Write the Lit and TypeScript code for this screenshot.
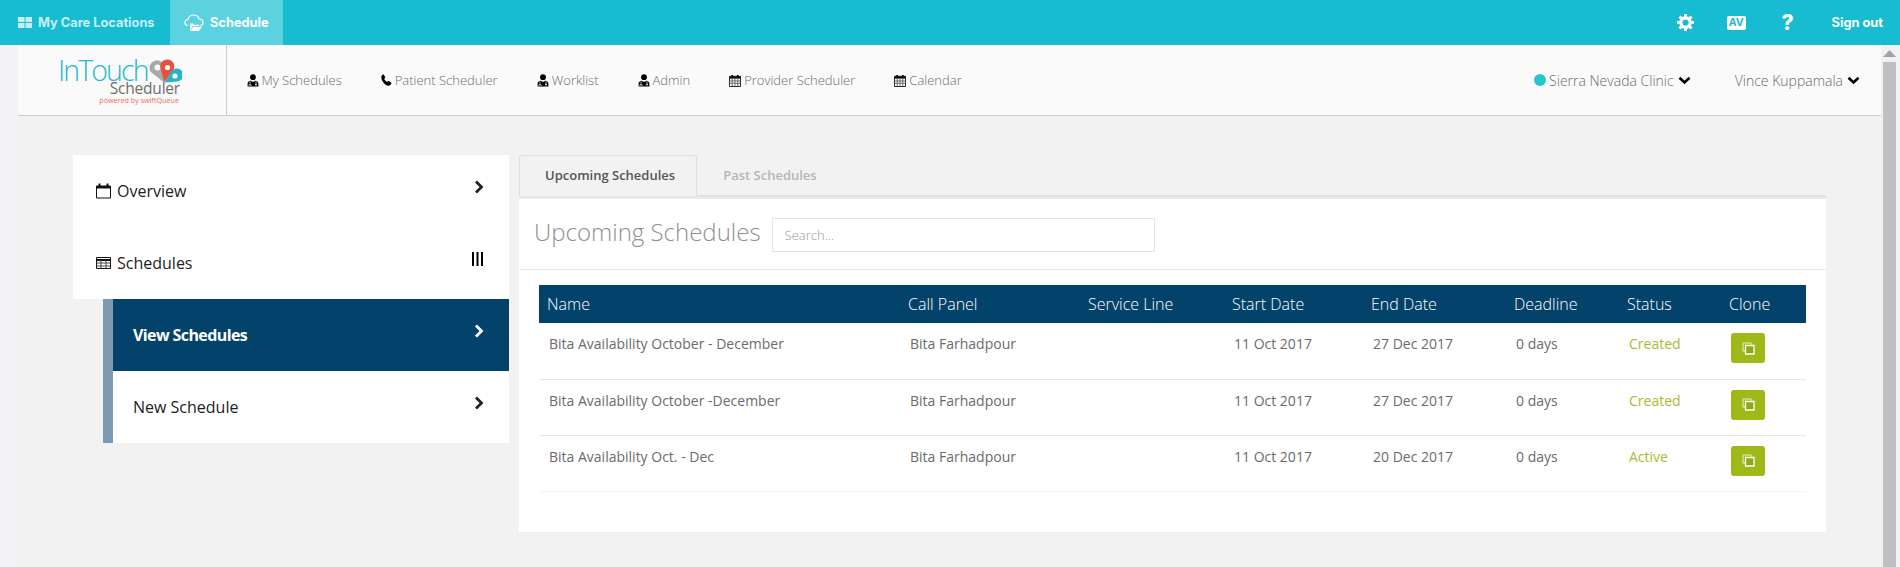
import { LitElement, html, css, svg } from 'lit';
import { customElement } from 'lit/decorators.js';

const doctor = html`<svg class="ico" width="12" height="13" viewBox="0 0 12 13"><circle cx="6" cy="3.2" r="2.9" fill="#000"/><path d="M.6 12.6V9.6C.6 7.9 2 7 3.6 6.7L6 8l2.4-1.3c1.6.3 3 1.2 3 2.9v3z" fill="#000"/><path d="M3 7.5v2M2 12v-1.2c0-.7 2-.7 2 0V12M9 7.5v2.2" stroke="#fff" stroke-width=".8" fill="none"/><circle cx="9" cy="10.6" r=".9" fill="#fff"/></svg>`;
const phone = html`<svg class="ico" width="11" height="12" viewBox="0 0 11 12"><path d="M2.6.4 4.2 3c.2.4.1.7-.2 1l-.8.8c.5 1.300 1.500 2.500 2.900 3.200l.8-.8c.3-.3.6-.3 1-.1l2.300 1.600c.3.200.4.600.2.900-.6 1.200-1.600 2.200-2.700 2.200C4 11.800.3 6.700.3 3 .3 2 1 1 2 .4c.2-.1.500-.1.600 0z" fill="#000"/></svg>`;
const gridCal = html`<svg class="ico" width="12" height="13" viewBox="0 0 13 14" fill="none"><path d="M.5 2.500h12v11H.5z" fill="#fff" stroke="#111"/><path d="M.5 2.500h12v2.500H.5z" fill="#111"/><path d="M3.500 1v2.500M9.500 1v2.500" stroke="#111" stroke-width="2"/><path d="M.5 7.500h12M.5 10h12M3.500 5v8.500M6.500 5v8.500M9.500 5v8.500" stroke="#555" stroke-width=".9"/></svg>`;
const chevDown = html`<svg class="chev-d" width="13" height="9" viewBox="0 0 13 9"><path d="M1.500 1.700 6.500 6.500l5-4.800" fill="none" stroke="#000" stroke-width="2.600"/></svg>`;
const chevRight = html`<svg class="chev-r" width="10" height="14" viewBox="0 0 10 14"><path d="M2 1.500 7.500 7 2 12.500" fill="none" stroke="currentColor" stroke-width="2.800"/></svg>`;
const copy = html`<svg width="13" height="13" viewBox="0 0 13 13" fill="none"><path d="M9 2.500V1H1v8h2" stroke="#e9f1c9" stroke-width="1"/><path d="M3.500 3.500h8.500V12H3.500z" stroke="#fff" stroke-width="1.300" fill="#8ea814"/></svg>`;

const navLinks = [
  { icon: doctor, label: 'My Schedules' },
  { icon: phone, label: 'Patient Scheduler' },
  { icon: doctor, label: 'Worklist' },
  { icon: doctor, label: 'Admin' },
  { icon: gridCal, label: 'Provider Scheduler' },
  { icon: gridCal, label: 'Calendar' },
];

const rows = [
  { name: 'Bita Availability October - December', panel: 'Bita Farhadpour', start: '11 Oct 2017', end: '27 Dec 2017', status: 'Created' },
  { name: 'Bita Availability October -December', panel: 'Bita Farhadpour', start: '11 Oct 2017', end: '27 Dec 2017', status: 'Created' },
  { name: 'Bita Availability Oct. - Dec', panel: 'Bita Farhadpour', start: '11 Oct 2017', end: '20 Dec 2017', status: 'Active' },
];

const columns = ['Name', 'Call Panel', 'Service Line', 'Start Date', 'End Date', 'Deadline', 'Status', 'Clone'];
const colWidths = [361, 180, 144, 139, 143, 113, 102, 85];

const logoMark = svg`<svg class="mark" width="34" height="24" viewBox="0 0 34 24">
  <path d="M16 23.500 2.600 12.800A7.600 7.600 0 1 1 16.500 7z" fill="#a9aaa8"/>
  <circle cx="9.500" cy="8.500" r="3" fill="#fafafa"/>
  <path d="M16.500 23.500 12.800 10A7 7 0 1 1 25.800 10z" fill="#e8503f"/>
  <circle cx="19.500" cy="8.500" r="2.600" fill="#fafafa"/>
  <path d="M17 23.500 24 11.500A6.500 6.500 0 1 1 29 22.500z" fill="#23b5c9"/>
  <circle cx="27" cy="17" r="2.600" fill="#fafafa"/>
</svg>`;

@customElement('app-root')
export class AppRoot extends LitElement {
  static styles = css`
    :host {
      display: flex;
      flex-direction: column;
      height: 567px;
      overflow: hidden;
      background: #f3f3f7;
      font-family: 'Open Sans', 'Liberation Sans', sans-serif;
    }
    .topbar {
      flex: none;
      height: 45px;
      background: #17bcd0;
      display: flex;
      align-items: stretch;
      color: #fff;
      font-family: Inter, 'Liberation Sans', sans-serif;
      font-weight: 700;
      font-size: 12.800px;
    }
    .top-item {
      display: flex;
      align-items: center;
      gap: 6px;
      padding: 0 15px 0 18px;
      width: 170px;
      box-sizing: border-box;
      color: #c6eff5;
      white-space: nowrap;
    }
    .top-item.active {
      width: 113px;
      padding: 0 0 0 14px;
      background: #5cd2e0;
      color: #fff;
      gap: 6px;
    }
    .top-right {
      margin-left: auto;
      display: flex;
      align-items: center;
      padding-right: 17px;
    }
    .av {
      width: 19px;
      height: 14px;
      background: #fff;
      border-radius: 2px;
      color: #17bcd0;
      font-size: 10.500px;
      line-height: 14px;
      text-align: center;
      margin: 0 36px 0 33px;
    }
    .help { font-size: 21px; font-weight: 800; width: 12px; margin-right: 38px; line-height: 1; }
    .body {
      flex: 1;
      display: flex;
      min-height: 0;
      padding-left: 18px;
    }
    .main {
      flex: 1;
      min-width: 0;
      background: #f2f2f2;
    }
    .scrollbar {
      flex: none;
      width: 19px;
      display: flex;
      flex-direction: column;
      background: linear-gradient(90deg, #f1f1f1 15px, #f3f3f7 15px);
    }
    .scroll-up {
      height: 17px;
      display: flex;
      align-items: center;
      padding-left: 2px;
    }
    .scroll-thumb {
      flex: 1;
      width: 13px;
      margin-left: 2px;
      background: #c0c0c0;
    }
    .subnav {
      height: 71px;
      box-sizing: border-box;
      background: #fafafa;
      border-bottom: 1px solid #cccccc;
      display: flex;
      align-items: stretch;
      color: #6b6b6b;
      font-size: 13px;
      font-weight: 300;
    }
    .logo {
      width: 209px;
      box-sizing: border-box;
      border-right: 1px solid #cccccc;
      padding: 13px 0 0 40px;
    }
    .logo-box { width: 122px; display: flex; flex-direction: column; align-items: flex-end; }
    .logo-top { display: flex; align-self: flex-start; align-items: flex-start; height: 24px; }
    .logo-in {
      font-size: 28.500px;
      line-height: 24px;
      letter-spacing: -1.900px;
      color: #25b9cd;
      font-weight: 300;
    }
    .mark { margin: 1px 0 0 0; flex: none; }
    .logo-sch {
      font-size: 15.500px;
      line-height: 13px;
      font-weight: 400;
      color: #6e6e6c;
      letter-spacing: -0.200px;
    }
    .logo-pow { font-size: 7.200px; line-height: 10px; color: #ef6a5c; font-weight: 400; padding-right: 1px; white-space: nowrap; }
    .links {
      display: flex;
      align-items: center;
      gap: 39px;
      padding-left: 19.500px;
    }
    .link { display: flex; align-items: center; gap: 3px; white-space: nowrap; }
    .ico { flex: none; }
    .user {
      margin-left: auto;
      display: flex;
      align-items: center;
      padding-right: 21px;
      font-size: 14px;
    }
    .dot {
      width: 12px;
      height: 12px;
      border-radius: 50%;
      background: #27c6ce;
      margin-right: 3px;
    }
    .chev-d { margin-left: 4px; }
    .clinic { margin-right: 44px; display: flex; align-items: center; }
    .content {
      display: flex;
      align-items: flex-start;
      padding: 39px 0 0 55px;
    }
    .side {
      width: 436px;
      flex: none;
      color: #222;
      font-size: 16px;
      font-weight: 400;
    }
    .side-top { background: #fff; }
    .side-item {
      height: 72px;
      box-sizing: border-box;
      display: flex;
      align-items: center;
      gap: 6px;
      padding: 0 25px 0 23px;
    }
    .side-item > svg:last-child { margin: -8px 0 0 auto; }
    .bars { margin-right: -3px; }
    .sub { margin-left: 30px; border-left: 10px solid #7d9bb0; background: #fff; }
    .sub .side-item { padding-left: 20px; }
    .sub .side-item.on { background: #03426a; color: #fff; font-weight: 700; letter-spacing: -0.600px; }
    .right {
      width: 1307px;
      flex: none;
      margin-left: 10px;
    }
    .tabs {
      display: flex;
      height: 40px;
      border-bottom: 2px solid #dfe1e3;
      box-sizing: content-box;
      font-size: 13px;
      font-weight: 600;
    }
    .tab {
      height: 41px;
      box-sizing: border-box;
      padding: 0 21px 2px 25px;
      display: flex;
      align-items: center;
      color: #b2b6bd;
      border: 1px solid transparent;
    }
    .tab.on {
      color: #555;
      background: #f2f2f2;
      border-color: #dddddd;
      border-bottom-color: #f2f2f2;
      border-radius: 3px 3px 0 0;
    }
    .strip { height: 2px; background: #e8ebed; }
    .panel { background: #fff; height: 333px; box-sizing: border-box; }
    .panel-head {
      height: 71px;
      box-sizing: border-box;
      border-bottom: 1px solid #e8e8e8;
      display: flex;
      align-items: flex-start;
      padding: 19px 0 0 15px;
    }
    h2 {
      margin: -3px 0 0;
      font-size: 24px;
      line-height: 33px;
      font-weight: 300;
      color: #8f8f8f;
      white-space: nowrap;
    }
    .search {
      margin-left: 11px;
      width: 383px;
      height: 34px;
      box-sizing: border-box;
      border: 1px solid #e5e5e5;
      padding: 0 12px;
      font: 300 13px 'Open Sans', sans-serif;
      color: #777;
      background: #fff;
      outline: none;
    }
    .search::placeholder { color: #999; opacity: 1; }
    table {
      margin: 15px 0 0 20px;
      width: 1267px;
      border-collapse: collapse;
      table-layout: fixed;
    }
    th {
      height: 38px;
      padding: 0 0 0 8px;
      background: #03426a;
      color: #fff;
      font-size: 16px;
      font-weight: 300;
      text-align: left;
      white-space: nowrap;
    }
    td {
      height: 56px;
      box-sizing: border-box;
      padding: 11px 0 0 10px;
      vertical-align: top;
      font-size: 14px;
      line-height: 20px;
      color: #6b6b6b;
      border-bottom: 1px solid #e8e8e8;
      white-space: nowrap;
    }
    tr:last-child td { border-bottom-color: #f4f4f4; }
    td.status { color: #a4bd2e; }
    td.clone { padding: 10px 0 0 10px; }
    .clone-btn {
      width: 34px;
      height: 30px;
      padding: 0;
      border: 0;
      border-radius: 3px;
      background: #9fb919;
      display: flex;
      align-items: center;
      justify-content: center;
    }
  `;

  render() {
    return html`
      <div class="topbar">
        <div class="top-item">
          <svg width="14" height="11" viewBox="0 0 14 11" fill="#c6eff5"><path d="M0 0h6.500v5H0zM7.500 0H14v5H7.500zM0 6h6.500v5H0zM7.500 6H14v5H7.500z"/></svg>
          My Care Locations
        </div>
        <div class="top-item active">
          <svg width="20" height="18" viewBox="0 0 20 18" fill="none"><path d="M3.500 11.500C1.500 11 .8 9.500 1 8c.2-1.500 1.500-2.500 3-2.500C4.500 3 6.500 1 9.500 1c3 0 5 2 5.500 4 2.500 0 4 1.500 4 3.500 0 1.500-1 2.800-2.500 3.200" stroke="#fff" stroke-width="1.200"/><path d="M6 17V9.500h3l1 1.300h5V12H8.500L6 17zm.5 0 2.500-4.300h9L15 17z" fill="#fff"/></svg>
          Schedule
        </div>
        <div class="top-right">
          <svg width="17" height="17" viewBox="0 0 17 17"><circle cx="8.500" cy="8.500" r="4.700" fill="none" stroke="#fff" stroke-width="3.200"/><path d="M8.500 0v3M8.500 14v3M0 8.500h3M14 8.500h3M2.500 2.500l2.100 2.100M12.400 12.400l2.100 2.100M2.500 14.500l2.100-2.100M12.400 4.600l2.100-2.100" stroke="#fff" stroke-width="3"/></svg>
          <span class="av">AV</span>
          <span class="help">?</span>
          <span>Sign out</span>
        </div>
      </div>
      <div class="body">
        <div class="main">
          <div class="subnav">
            <div class="logo">
              <div class="logo-box">
                <div class="logo-top"><span class="logo-in">InTouch</span>${logoMark}</div>
                <div class="logo-sch">Scheduler</div>
                <div class="logo-pow">powered by swiftQueue</div>
              </div>
            </div>
            <div class="links">
              ${navLinks.map((l) => html`<span class="link">${l.icon}${l.label}</span>`)}
            </div>
            <div class="user">
              <span class="clinic"><span class="dot"></span>Sierra Nevada Clinic${chevDown}</span>
              <span>Vince Kuppamala</span>${chevDown}
            </div>
          </div>
          <div class="content">
            <div class="side">
              <div class="side-top">
                <div class="side-item">
                  <svg width="15" height="16" viewBox="0 0 15 16" fill="none"><path d="M.5 3h14v12H.5z" stroke="#111"/><path d="M.5 3h14v2.500H.5z" fill="#111"/><path d="M3.500 .5v3M11.500 .5v3" stroke="#111" stroke-width="2"/></svg>
                  Overview${chevRight}
                </div>
                <div class="side-item">
                  <svg width="15" height="12" viewBox="0 0 15 12" fill="none"><path d="M.5.500h14v11H.5z" stroke="#111"/><path d="M.5 3h14" stroke="#111" stroke-width="2"/><path d="M.5 6h14M.5 9h14M5 3v8M10 3v8" stroke="#333" stroke-width=".9"/></svg>
                  Schedules
                  <svg class="bars" width="12" height="14" viewBox="0 0 12 14" fill="#000"><path d="M0 0h2v14H0zM4.500 0h2v14h-2zM9 0h2v14H9z"/></svg>
                </div>
              </div>
              <div class="sub">
                <div class="side-item on">View Schedules${chevRight}</div>
                <div class="side-item">New Schedule${chevRight}</div>
              </div>
            </div>
            <div class="right">
              <div class="tabs">
                <div class="tab on">Upcoming Schedules</div>
                <div class="tab">Past Schedules</div>
              </div>
              <div class="strip"></div>
              <div class="panel">
                <div class="panel-head">
                  <h2>Upcoming Schedules</h2>
                  <input class="search" placeholder="Search..." />
                </div>
                <table>
                  <colgroup>${colWidths.map((w) => html`<col style="width:${w}px" />`)}</colgroup>
                  <thead><tr>${columns.map((c) => html`<th>${c}</th>`)}</tr></thead>
                  <tbody>
                    ${rows.map((r) => html`<tr>
                      <td>${r.name}</td>
                      <td>${r.panel}</td>
                      <td></td>
                      <td>${r.start}</td>
                      <td>${r.end}</td>
                      <td>0 days</td>
                      <td class="status">${r.status}</td>
                      <td class="clone"><button class="clone-btn">${copy}</button></td>
                    </tr>`)}
                  </tbody>
                </table>
              </div>
            </div>
          </div>
        </div>
        <div class="scrollbar">
          <div class="scroll-up"><svg width="13" height="7" viewBox="0 0 13 7"><path d="M6.500 0 13 7H0z" fill="#a3a3a3"/></svg></div>
          <div class="scroll-thumb"></div>
        </div>
      </div>
    `;
  }
}
